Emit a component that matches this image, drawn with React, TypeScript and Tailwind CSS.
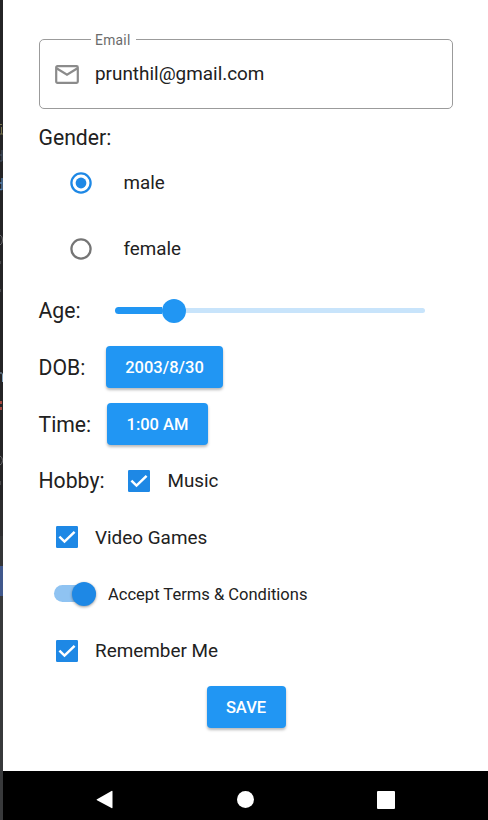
import type { ReactNode } from "react";

function Check() {
  return (
    <svg width="22" height="22" viewBox="0 0 22 22" className="block shrink-0" role="img" aria-label="checked">
      <rect width="22" height="22" rx="1.2" fill="#1e88e5" />
      <path d="M3.4 10.7 8.5 15.6 18.6 5.8" fill="none" stroke="#fff" strokeWidth="2.5" />
    </svg>
  );
}

function Radio({ on }: { on?: boolean }) {
  return (
    <svg width="22" height="22" viewBox="0 0 22 22" className="block shrink-0">
      <circle cx="11" cy="11" r="9.6" fill="none" stroke={on ? "#1e88e5" : "#757575"} strokeWidth="2.3" />
      {on && <circle cx="11" cy="11" r="5.4" fill="#1e88e5" />}
    </svg>
  );
}

function Label({ className, children }: { className: string; children: ReactNode }) {
  return <span className={"shrink-0 whitespace-nowrap text-[21.2px] leading-7 " + className}>{children}</span>;
}

function Button({ className, children }: { className: string; children: ReactNode }) {
  return (
    <button
      className={
        "h-[42px] shrink-0 whitespace-nowrap rounded-[4px] bg-[#2196f3] text-[16.5px] font-medium text-white shadow-[0_2px_3px_rgba(0,0,0,0.28)] " +
        className
      }
    >
      {children}
    </button>
  );
}

function EditorEdge() {
  return (
    <div className="flex h-[820px] w-[3px] shrink-0 flex-col bg-[#242426]">
      <svg width="3" height="500" viewBox="0 0 3 500" fill="none" className="block shrink-0">
        <path d="M0 124.5h2M1.5 127v7M0 134h3" stroke="#77734c" />
        <path d="M2 150v11M0 155h2M0 161h2" stroke="#46566a" />
        <path d="M2 178v12M0 183h2M0 189.5h2" stroke="#5681b0" strokeWidth="1.3" />
        <path d="M0 235q2.5 1 2.5 5t-2.5 5M0 261v3M0 289v3" stroke="#68686b" />
        <path d="M0 373h1.5q1 0 1 2v7" stroke="#86a4bd" />
        <path d="M1 401v3M1 407v3" stroke="#a5483f" strokeWidth="2" />
        <path d="M0 456q2.5 1 2.5 4.500t-2.500 4.500M0 481v4" stroke="#68686b" />
      </svg>
      <div className="h-[36px] bg-[#2d2d2f]" />
      <div className="h-[30px] bg-[#343537]" />
      <div className="h-[30px] bg-[#40588c]" />
      <div className="flex-1 bg-[#38393b]" />
    </div>
  );
}

export default function App() {
  return (
    <div className="flex h-[820px] w-[488px] overflow-hidden bg-white font-[Roboto,sans-serif] text-[#212121]">
      <EditorEdge />
      <div className="flex w-[485px] flex-col">
        <main className="flex h-[771px] flex-col pl-[35.500px]">
          <fieldset className="mt-[31px] h-[78px] w-[414.500px] rounded-[5px] border border-[#9b9b9b] pl-[51.500px]">
            <legend className="h-[17px] pl-1 pr-[5px] pt-px text-[13.8px] leading-[17px] tracking-[0.3px] text-[#6b6b6b]">Email</legend>
            <div className="-ml-[36.500px] mt-[9px] flex h-[34px] items-center">
              <svg width="24" height="19" viewBox="0 0 24 19" className="block shrink-0">
                <rect x="1.2" y="1.2" width="21.6" height="16.6" rx="1.2" fill="none" stroke="#8b8b8b" strokeWidth="2.2" />
                <path d="m1.5 3.3 10.5 6.5 10.5-6.5" fill="none" stroke="#8b8b8b" strokeWidth="2.2" />
              </svg>
              <span className="ml-[16.500px] text-[18.9px] leading-6">prunthil@gmail.com</span>
            </div>
          </fieldset>
          <div className="flex h-[58px] items-center">
            <Label className="">Gender:</Label>
          </div>
          <div className="flex h-[32px] items-center pl-[31.500px] text-[18.8px] leading-6">
            <Radio on />
            <span className="ml-[31.500px]">male</span>
          </div>
          <div className="mt-[34px] flex h-[32px] items-center pl-[31.500px] text-[18.8px] leading-6">
            <Radio />
            <span className="ml-[31.500px]">female</span>
          </div>
          <div className="mt-[17px] flex h-[57px] items-center">
            <Label className="w-[76.500px]">Age:</Label>
            <div className="flex h-6 w-[310px] items-center">
              <div className="h-[7px] w-[47px] rounded-l-full bg-[#2196f3]" />
              <div className="h-6 w-6 shrink-0 rounded-full bg-[#2196f3]" />
              <div className="h-[5px] flex-1 rounded-r-full bg-[#c8e4fb]" />
            </div>
          </div>
          <div className="flex h-[56px] items-center">
            <Label className="w-[67.500px] pt-px">DOB:</Label>
            <Button className="w-[117px] pt-[2px]">2003/8/30</Button>
          </div>
          <div className="flex h-[57px] items-center">
            <Label className="w-[68.500px] pt-[2px]">Time:</Label>
            <Button className="w-[101px] pt-[4px]">1:00 AM</Button>
          </div>
          <div className="flex h-[57px] items-center">
            <Label className="w-[89.500px]">Hobby:</Label>
            <Check />
            <span className="ml-[17.500px] pt-px text-[18.8px]">Music</span>
          </div>
          <div className="flex h-[56px] items-center pl-[17.500px]">
            <Check />
            <span className="ml-[17px] pt-[2px] text-[18.9px]">Video Games</span>
          </div>
          <div className="flex h-[57px] items-center pl-[15.500px]">
            <div className="flex h-[17px] w-[42px] items-center justify-end rounded-full bg-[#8fc3f2]">
              <div className="h-6 w-6 rounded-full bg-[#1e88e5] shadow-[0_1px_3px_rgba(0,0,0,0.4)]" />
            </div>
            <span className="ml-3 pt-[3px] text-[16.55px]">Accept Terms &amp; Conditions</span>
          </div>
          <div className="flex h-[56px] items-center pl-[17.500px] pt-px">
            <Check />
            <span className="ml-[17px] pt-[2px] text-[18.9px]">Remember Me</span>
          </div>
          <div className="flex h-[57px] items-center pl-[168px]">
            <Button className="w-[79px] pt-[4px]">SAVE</Button>
          </div>
        </main>
        <nav className="flex h-[49px] items-center bg-black pl-[93px] pt-[8px]">
          <svg width="17" height="20" viewBox="0 0 17 20" className="block">
            <path d="M1 9.3 15.5 1q1-.5 1 .6v16q0 1-1 .5L1 10.3q-1-.5 0-1Z" fill="#fff" />
          </svg>
          <div className="ml-[124px] h-[17px] w-[17px] rounded-full bg-white" />
          <div className="ml-[123px] h-[18px] w-[18px] rounded-[1px] bg-white" />
        </nav>
      </div>
    </div>
  );
}
